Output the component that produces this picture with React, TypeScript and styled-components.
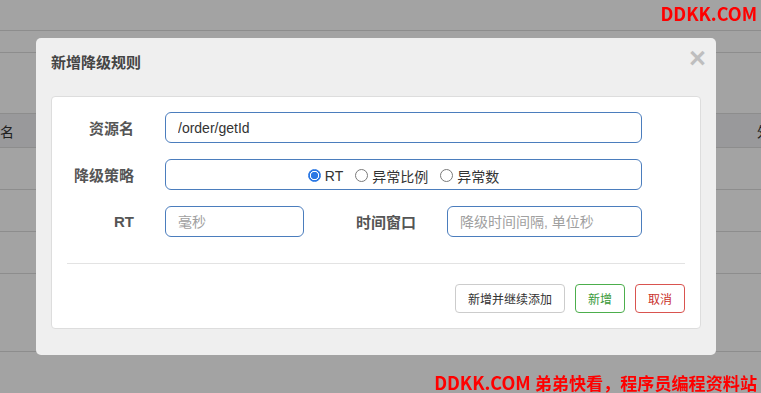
import React from "react";
import styled, { createGlobalStyle } from "styled-components";

const GlobalStyle = createGlobalStyle`
  html, body {
    margin: 0;
    padding: 0;
    width: 761px;
    height: 393px;
    overflow: hidden;
    background: #fff;
    font-family: "Liberation Sans", "Noto Sans CJK SC", sans-serif;
  }
`;

const CJK = `"Liberation Sans", "Noto Sans CJK SC", sans-serif`;

/* ---------- page behind the dialog ---------- */

const Page = styled.div`
  width: 761px;
  height: 393px;
  overflow: hidden;
  background: #fff;
`;

const TopBar = styled.div`
  height: 31px;
  border-bottom: 1px solid #ddd;
  box-sizing: border-box;
`;

const Toolbar = styled.div`
  height: 21px;
  border-bottom: 1px solid #ddd;
  box-sizing: border-box;
  margin-top: 1px;
`;

const Spacer = styled.div<{ $h: number }>`
  height: ${(p) => p.$h}px;
`;

const TableHead = styled.div`
  display: flex;
  justify-content: space-between;
  align-items: center;
  height: 35px;
  box-sizing: border-box;
  background: #f0f0f2;
  border-top: 1px solid #ddd;
  border-bottom: 1px solid #ddd;
  font-size: 14px;
  color: #333;
  font-family: ${CJK};
`;

const HeadCell = styled.span<{ $edge: "left" | "right" }>`
  flex-shrink: 0;
  white-space: nowrap;
  ${(p) => (p.$edge === "left" ? "margin-left: -28px;" : "margin-right: -62px; width: 66px;")}
`;

const TableRow = styled.div`
  height: 42px;
  box-sizing: border-box;
  border-bottom: 1px solid #ddd;
`;

const Footer = styled.div`
  height: 78px;
  box-sizing: border-box;
  border-bottom: 1px solid #ddd;
`;

/* ---------- dialog ---------- */

const Backdrop = styled.div`
  position: fixed;
  inset: 0;
  background: rgba(0, 0, 0, 0.36);
  padding: 38px 0 0 36px;
  box-sizing: border-box;
`;

const Modal = styled.div`
  width: 680px;
  height: 317px;
  box-sizing: border-box;
  background: #efefef;
  border-radius: 5px;
  padding: 0 15px 26px;
  display: flex;
  flex-direction: column;
`;

const ModalHeader = styled.div`
  display: flex;
  justify-content: space-between;
  align-items: flex-start;
  padding: 15px 0 0 0;
  height: 58px;
  box-sizing: border-box;
`;

const Title = styled.h4`
  margin: 0;
  font-family: ${CJK};
  font-size: 15px;
  line-height: 20px;
  font-weight: bold;
  color: #444;
`;

const Close = styled.button`
  border: none;
  background: none;
  padding: 0;
  margin: -9px -5px 0 0;
  font-family: "Liberation Sans", sans-serif;
  font-size: 29px;
  line-height: 28px;
  font-weight: bold;
  color: #000;
  opacity: 0.2;
  cursor: pointer;
`;

const Panel = styled.div`
  flex: 1;
  background: #fff;
  border: 1px solid #ddd;
  border-radius: 4px;
  padding: 15px 15px 15px;
  display: flex;
  flex-direction: column;
`;

const Form = styled.div`
  display: flex;
  flex-direction: column;
  gap: 16px;
`;

const Row = styled.div`
  display: flex;
  align-items: center;
  gap: 31px;
  padding-right: 43px;
`;

const Label = styled.label<{ $w: number }>`
  width: ${(p) => p.$w}px;
  flex-shrink: 0;
  text-align: right;
  font-family: ${CJK};
  font-size: 15px;
  font-weight: bold;
  color: #555;
  white-space: nowrap;
`;

const Input = styled.input<{ $w?: number }>`
  ${(p) => (p.$w ? `width: ${p.$w}px; flex-shrink: 0;` : "flex: 1; min-width: 0;")}
  height: 31px;
  box-sizing: border-box;
  border: 1px solid #4b7dbd;
  border-radius: 6px;
  padding: 0 12px;
  font-family: ${CJK};
  font-size: 14px;
  color: #333;
  outline: none;
  &::placeholder {
    color: #a0a0a0;
    font-size: 14px;
  }
`;

const RadioBox = styled.div`
  flex: 1;
  height: 31px;
  box-sizing: border-box;
  border: 1px solid #4b7dbd;
  border-radius: 6px;
  display: flex;
  justify-content: center;
  align-items: center;
  gap: 12px;
  padding-top: 2px;
`;

const RadioLabel = styled.label`
  display: flex;
  align-items: center;
  gap: 4px;
  font-family: ${CJK};
  font-size: 14px;
  color: #333;
`;

const Radio = styled.input.attrs({ type: "radio" })`
  appearance: none;
  margin: 0;
  width: 13px;
  height: 13px;
  border-radius: 50%;
  border: 1px solid #7a7a7a;
  background: #fff;
  box-sizing: border-box;
  &:checked {
    border-color: #2b78e4;
    background: radial-gradient(circle, #2b78e4 0 3.4px, #fff 4px 4.4px, #2b78e4 4.8px);
  }
`;

const Divider = styled.hr`
  border: none;
  border-top: 1px solid #e3e3e3;
  margin: 26px 0 20px;
  width: 100%;
`;

const Actions = styled.div`
  display: flex;
  justify-content: flex-end;
  gap: 10px;
`;

const tones = {
  plain: { border: "#ccc", color: "#333" },
  ok: { border: "#4cae4c", color: "#3a9a3a" },
  danger: { border: "#d9534f", color: "#c9302c" },
};

const Button = styled.button<{ $tone: keyof typeof tones }>`
  height: 29px;
  padding: 0 12px;
  background: #fff;
  border: 1px solid ${(p) => tones[p.$tone].border};
  color: ${(p) => tones[p.$tone].color};
  border-radius: 4px;
  font-family: ${CJK};
  font-size: 12px;
  cursor: pointer;
`;

/* ---------- watermark ---------- */

const Mark = styled.div<{ $pos: "top" | "bottom" }>`
  position: fixed;
  right: 4px;
  ${(p) => (p.$pos === "top" ? "top: 0;" : "bottom: -3px;")}
  color: #ff0000;
  font-family: "Noto Sans CJK SC", sans-serif;
  font-weight: bold;
  font-size: 18px;
  line-height: 26px;
  white-space: nowrap;
`;

const MarkCjk = styled.span`
  font-size: 17.1px;
`;

export default function App() {
  return (
    <>
      <GlobalStyle />
      <Page>
        <TopBar />
        <Toolbar />
        <Spacer $h={60} />
        <TableHead>
          <HeadCell $edge="left">资源名</HeadCell>
          <HeadCell $edge="right">外部资源</HeadCell>
        </TableHead>
        <TableRow />
        <TableRow />
        <TableRow />
        <Footer />
      </Page>
      <Backdrop>
        <Modal>
          <ModalHeader>
            <Title>新增降级规则</Title>
            <Close aria-label="关闭">×</Close>
          </ModalHeader>
          <Panel>
            <Form>
              <Row>
                <Label $w={67}>资源名</Label>
                <Input defaultValue="/order/getId" />
              </Row>
              <Row>
                <Label $w={67}>降级策略</Label>
                <RadioBox>
                  <RadioLabel>
                    <Radio name="grade" defaultChecked />
                    RT
                  </RadioLabel>
                  <RadioLabel>
                    <Radio name="grade" />
                    异常比例
                  </RadioLabel>
                  <RadioLabel>
                    <Radio name="grade" />
                    异常数
                  </RadioLabel>
                </RadioBox>
              </Row>
              <Row>
                <Label $w={67}>RT</Label>
                <Input $w={139} placeholder="毫秒" />
                <Label $w={81}>时间窗口</Label>
                <Input placeholder="降级时间间隔, 单位秒" />
              </Row>
            </Form>
            <Divider />
            <Actions>
              <Button $tone="plain">新增并继续添加</Button>
              <Button $tone="ok">新增</Button>
              <Button $tone="danger">取消</Button>
            </Actions>
          </Panel>
        </Modal>
      </Backdrop>
      <Mark $pos="top">DDKK.COM</Mark>
      <Mark $pos="bottom">
        DDKK.COM <MarkCjk>弟弟快看，程序员编程资料站</MarkCjk>
      </Mark>
    </>
  );
}
